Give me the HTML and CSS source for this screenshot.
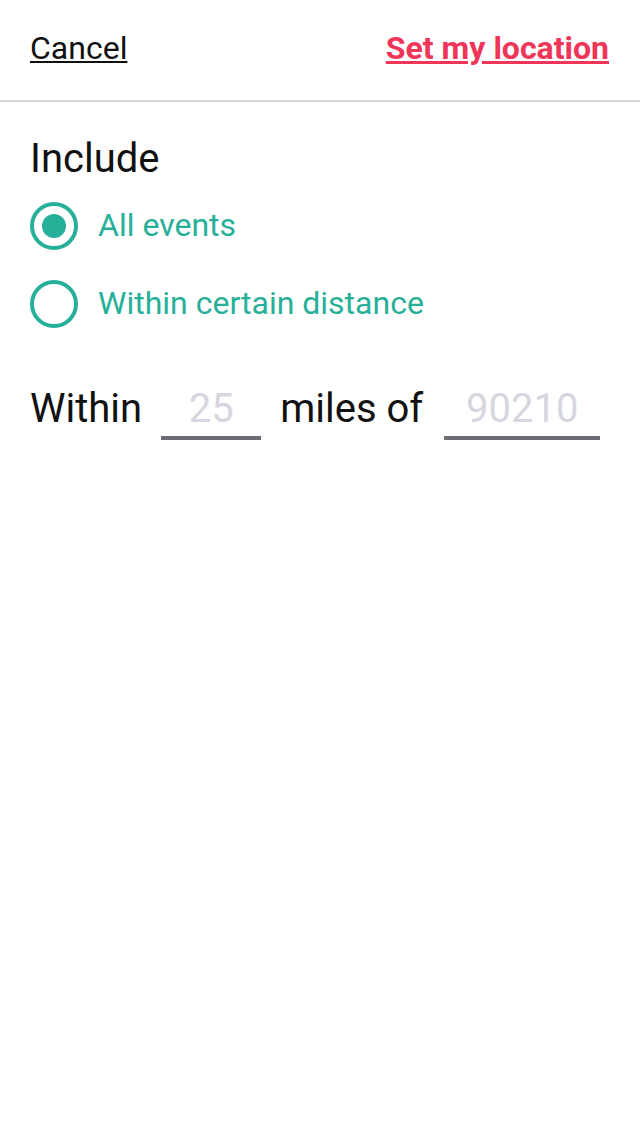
FILE: index.html
```html
<!DOCTYPE html>
<html>
<head>
<meta charset="utf-8">
<link rel="stylesheet" href="styles.css">
</head>
<body>
<header class="topbar">
  <a class="cancel" href="#">Cancel</a>
  <a class="setloc" href="#">Set my location</a>
</header>
<main class="content">
  <h2 class="include">Include</h2>
  <div class="options">
    <label class="option">
      <span class="radio checked"></span>
      <span class="opt-label">All events</span>
    </label>
    <label class="option">
      <span class="radio"></span>
      <span class="opt-label">Within certain distance</span>
    </label>
  </div>
  <div class="distance">
    <span class="dlabel">Within</span>
    <input class="field miles" type="text" placeholder="25">
    <span class="dlabel">miles of</span>
    <input class="field zip" type="text" placeholder="90210">
  </div>
</main>
</body>
</html>
```
FILE: styles.css
```css
* { box-sizing: border-box; }
html, body { margin: 0; padding: 0; background: #fff; }
body { font-family: Roboto, "Liberation Sans", sans-serif; width: 640px; height: 1136px; }

.topbar {
  height: 102px;
  display: flex;
  justify-content: space-between;
  align-items: flex-start;
  padding: 29px 31px 0 30px;
  border-bottom: 2px solid #d3d3dc;
}
.cancel {
  font-size: 32px;
  color: #111;
  text-decoration: underline;
  text-underline-offset: 2px;
  text-decoration-thickness: 2px;
  line-height: 38px;
}
.setloc {
  font-size: 32px;
  font-weight: 700;
  color: #ef3658;
  text-decoration: underline;
  text-underline-offset: 2px;
  text-decoration-thickness: 3px;
  line-height: 38px;
}

.content { padding: 0 30px; }
.include {
  margin: 34px 0 0 0;
  font-size: 40px;
  font-weight: 400;
  color: #111;
  line-height: 46px;
}
.options { display: flex; flex-direction: column; gap: 30px; margin-top: 20px; }
.option { display: flex; align-items: center; gap: 20px; height: 48px; }
.radio {
  width: 48px; height: 48px;
  border: 4.5px solid #27b099;
  border-radius: 50%;
  display: flex; align-items: center; justify-content: center;
  flex: none;
}
.radio.checked::after {
  content: "";
  width: 24px; height: 24px;
  border-radius: 50%;
  background: #27b099;
}
.opt-label { font-size: 32px; color: #27b099; padding-bottom: 3px; }

.distance {
  display: flex;
  align-items: flex-end;
  margin-top: 57px;
  gap: 19px;
}
.dlabel { font-size: 40px; color: #111; line-height: 47px; padding-bottom: 8px; }
.field {
  border: none;
  border-bottom: 4px solid #6d6c74;
  font-family: Roboto, "Liberation Sans", sans-serif;
  font-size: 40px;
  line-height: 47px;
  text-align: center;
  height: 55px;
  padding: 0 0 4px 0;
  outline: none;
  background: transparent;
  color: #111;
}
.field::placeholder { color: #d6d6e0; }
.miles { width: 100px; }
.zip { width: 156px; margin-left: 2px; }
```
